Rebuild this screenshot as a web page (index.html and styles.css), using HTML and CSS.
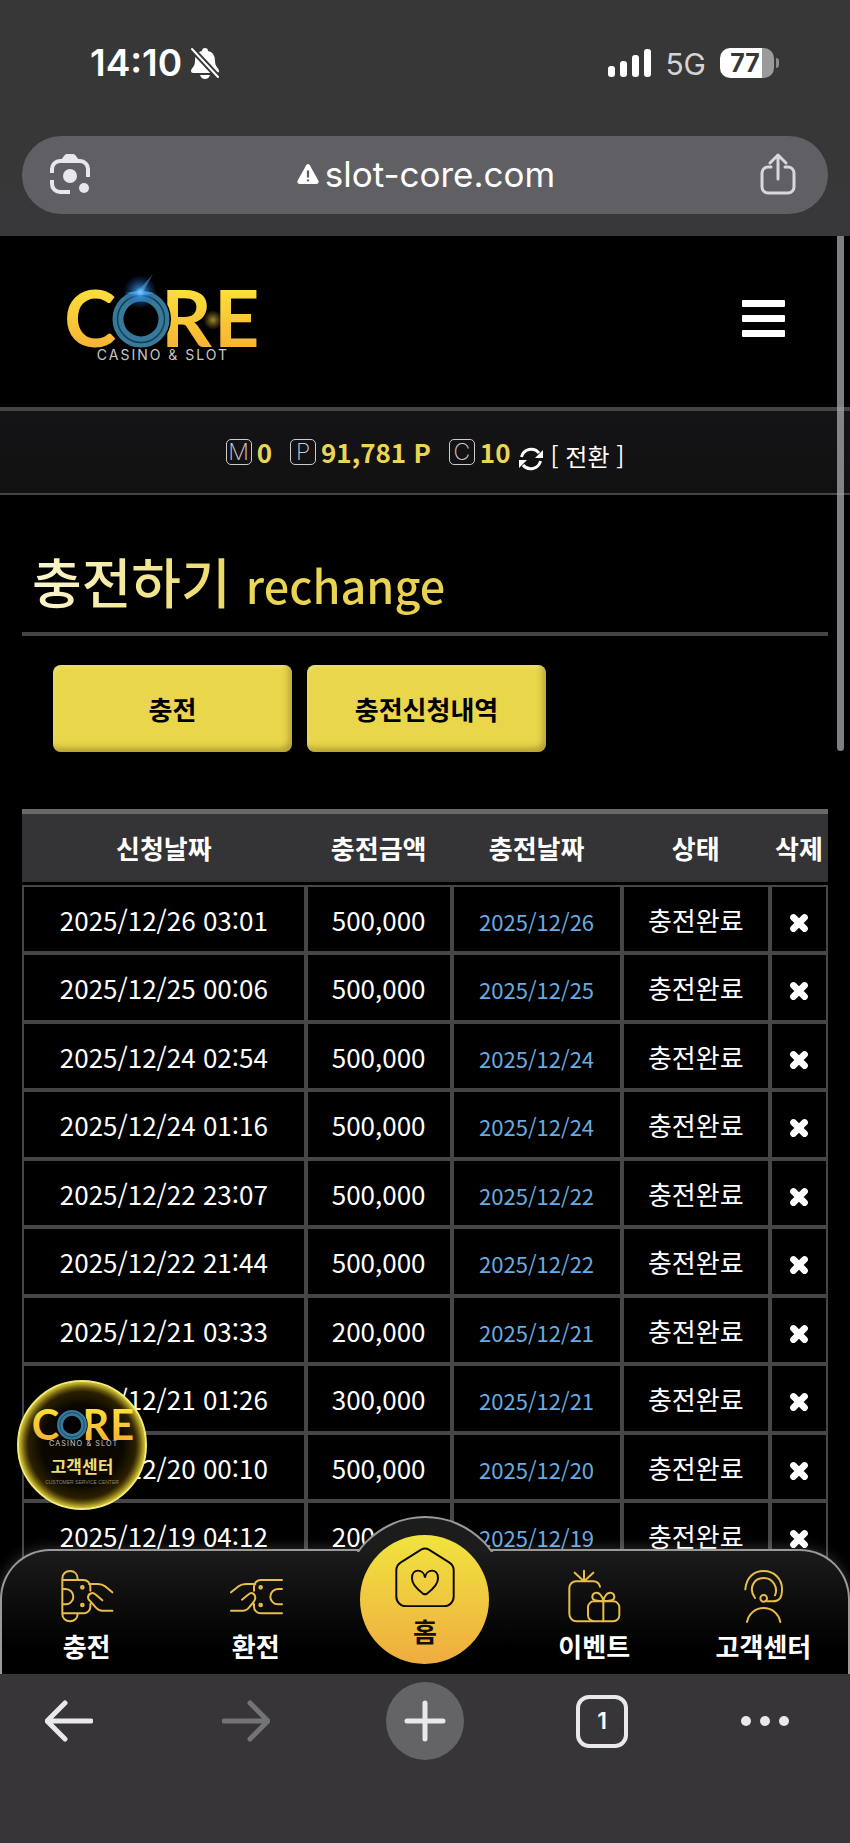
FILE: index.html
```html
<!DOCTYPE html>
<html lang="ko">
<head>
<meta charset="utf-8">
<meta name="viewport" content="width=device-width, initial-scale=1">
<title>충전하기 - CORE</title>
<link rel="stylesheet" href="styles.css">
</head>
<body>
<div class="chrome-top">
  <div class="status">
    <div class="status-left">
      <span class="clock">14:10</span>
      <svg class="bell" viewBox="0 0 30 32" aria-hidden="true">
        <path fill="#fff" d="M15 1c2 0 3 1 3 3 5 1 7 5 7 10 0 6 4 7 4 10 0 1-1 2-2 2H3c-1 0-2-1-2-2 0-3 4-4 4-10 0-5 2-9 7-10 0-2 1-3 3-3zM10 28h10c-1 3-3 4-5 4s-4-1-5-4z"/>
        <path stroke="#373737" stroke-width="6" d="M1 1l28 30"/>
        <path stroke="#fff" stroke-width="2" stroke-linecap="round" d="M2 2l26 28"/>
      </svg>
    </div>
    <div class="status-right">
      <svg class="signal" viewBox="0 0 43 28" fill="#fff" aria-hidden="true">
        <rect x="0" y="17" width="7" height="11" rx="3"/><rect x="12" y="12" width="7" height="16" rx="3"/><rect x="24" y="6" width="7" height="22" rx="3"/><rect x="36" y="0" width="7" height="28" rx="3"/>
      </svg>
      <span class="network">5G</span>
      <span class="battery">77</span>
    </div>
  </div>
  <div class="address">
    <button class="plain" type="button" aria-label="카메라 검색">
      <svg class="lens" viewBox="0 0 40 40" fill="none" stroke="#e8e8ec" stroke-width="4" stroke-linecap="butt">
        <path d="M2 19v-4a8 8 0 0 1 8-8h20a8 8 0 0 1 8 8v8M2 26v4a8 8 0 0 0 8 8h10"/>
        <path stroke="none" fill="#e8e8ec" d="M11 6l3-4q1-2 3-2h6q2 0 3 2l3 4z"/>
        <circle cx="20" cy="22" r="7" fill="#e8e8ec" stroke="none"/><circle cx="34" cy="34" r="5" fill="#e8e8ec" stroke="none"/>
      </svg>
    </button>
    <button class="plain host" type="button">
      <svg class="warn" viewBox="0 0 24 22" aria-hidden="true"><path fill="#fff" d="M10 1.500q2-3 4 0l9.500 17q1 3-2 3.500h-19q-3-.5-2-3.500z"/><path stroke="#5f5f63" stroke-width="2.500" stroke-linecap="round" d="M12 8v6M12 18v.2"/></svg>
      <span>slot-core.com</span>
    </button>
    <button class="plain" type="button" aria-label="공유">
      <svg class="share" viewBox="0 0 36 42" fill="none" stroke="#d8d8dc" stroke-width="3" stroke-linecap="round" stroke-linejoin="round">
        <path d="M11 14H8a6 6 0 0 0-6 6v14a6 6 0 0 0 6 6h20a6 6 0 0 0 6-6V20a6 6 0 0 0-6-6h-3M18 26V3M10 10l8-8 8 8"/>
      </svg>
    </button>
  </div>
</div>

<div class="viewport">
  <header class="site-head">
    <a class="logo-link" href="#" aria-label="CORE CASINO &amp; SLOT">
      <svg class="logo" viewBox="0 0 200 100">
        <defs>
          <linearGradient id="gold" x1="0" y1="0" x2="0" y2="1"><stop offset="0" stop-color="#fbee3c"/><stop offset="1" stop-color="#f6a733"/></linearGradient>
          <radialGradient id="blueGlow"><stop offset="0" stop-color="#7fe0ff"/><stop offset=".3" stop-color="#2f8fe0" stop-opacity=".7"/><stop offset="1" stop-color="#1a50b0" stop-opacity="0"/></radialGradient>
          <radialGradient id="goldGlow"><stop offset="0" stop-color="#ffe95a"/><stop offset="1" stop-color="#f0b030" stop-opacity="0"/></radialGradient>
          <g id="mark">
            <text class="mark-letter" x="4" y="76">C</text>
            <text class="mark-letter" x="101" y="76">R</text>
            <text class="mark-letter" x="154" y="76">E</text>
            <circle cx="81" cy="48" r="30" fill="#000"/>
            <circle cx="81" cy="48" r="23" fill="none" stroke="#37799a" stroke-width="11"/>
            <circle cx="81" cy="48" r="23.500" fill="none" stroke="#153f55" stroke-width="1.500"/>
            <text class="mark-sub" x="103" y="89" text-anchor="middle">CASINO &amp; SLOT</text>
          </g>
        </defs>
        <use href="#mark"/>
        <circle cx="80" cy="21" r="17" fill="url(#blueGlow)"/>
        <path fill="#6abfff" opacity=".45" d="M64 22l14-2 15-17-10 18 13 1-14 2z"/>
        <circle cx="153" cy="49" r="10" fill="url(#goldGlow)" opacity=".6"/>
      </svg>
    </a>
    <button class="plain burger" type="button" aria-label="메뉴"><span></span><span></span><span></span></button>
  </header>

  <section class="wallet">
    <span class="coin"><i class="tag">M</i><b>0</b></span>
    <span class="coin"><i class="tag">P</i><b>91,781 P</b></span>
    <span class="coin"><i class="tag">C</i><b>10</b></span>
    <a class="convert" href="#">
      <svg class="sync" viewBox="0 0 24 24" fill="none" stroke="#fff" stroke-width="3" aria-hidden="true"><path d="M2.500 10A10 10 0 0 1 20 6M21.500 14A10 10 0 0 1 4 18"/><path fill="#fff" stroke="none" d="M24 3v8h-8zM0 21v-8h8z"/></svg>
      <span>[ 전환 ]</span>
    </a>
  </section>

  <main class="page">
    <h1 class="title"><span class="title-text">충전하기 <small>rechange</small></span></h1>
    <div class="tabs">
      <button class="tab" type="button">충전</button>
      <button class="tab" type="button">충전신청내역</button>
    </div>
    <table class="history">
      <colgroup><col class="c-date"><col class="c-amount"><col class="c-done"><col class="c-state"><col class="c-del"></colgroup>
      <thead><tr><th>신청날짜</th><th>충전금액</th><th>충전날짜</th><th>상태</th><th>삭제</th></tr></thead>
      <tbody id="rows"></tbody>
    </table>
  </main>

  <div class="scrollbar"></div>

  <a class="support" href="#" aria-label="고객센터">
    <svg class="support-mark" viewBox="0 12 200 82" aria-hidden="true"><use href="#mark"/></svg>
    <span class="support-name">고객센터</span>
    <span class="support-sub">CUSTOMER SERVICE CENTER</span>
  </a>

  <nav class="dock">
    <div class="dock-bump"></div>
    <a class="dock-item" href="#">
      <svg class="dock-icon" viewBox="0 0 156 156"><path d="M4 132V26C4 12 14 3 27 3s23 9 23 24M4 30h64a20 20 0 0 1 20 20v12M4 130h64a20 20 0 0 0 20-20v-8M4 132c0 13 10 22 23 22s23-9 23-22M4 57h10a23 23 0 0 1 0 46H4M84 42h26c12 0 16 2 24 8l20 17M124 91L103 73c-8-8-22-2-22 10 0 6 6 10 10 14l13 15c6 7 10 10 20 10h30"/><circle cx="64" cy="52" r="4"/><circle cx="64" cy="105" r="4"/></svg>
      <span>충전</span>
    </a>
    <a class="dock-item" href="#">
      <svg class="dock-icon" viewBox="0 0 156 156"><path d="M156 30H92a20 20 0 0 0-20 20v12M156 130H92a20 20 0 0 1-20-20v-8M156 57h-12a23 23 0 0 0 0 46h12M76 42H48c-12 0-16 2-24 8L3 67M36 89l20-16c8-8 20-2 20 10 0 8-4 12-10 19l-12 14c-4 4-8 6-14 6H3"/><circle cx="92" cy="52" r="4"/><circle cx="92" cy="105" r="4"/></svg>
      <span>환전</span>
    </a>
    <a class="dock-item home" href="#">
      <svg class="home-icon" viewBox="0 0 184 184"><path d="M4 72c0-12 4-19 14-25L80 8q12-7 24 0l62 39c10 6 14 13 14 25v80a30 30 0 0 1-30 30H34a30 30 0 0 1-30-30zM92 94C88 66 52 64 52 96c0 22 22 38 34 47q6 4 12 0c12-9 34-25 34-47 0-32-36-30-40-2z"/></svg>
      <span>홈</span>
    </a>
    <a class="dock-item" href="#">
      <svg class="dock-icon" viewBox="0 0 156 156"><path d="M48 2v30M20 8l28 26L76 8M96 50c-3-11-10-16-20-16H24A20 20 0 0 0 4 54v78a22 22 0 0 0 22 22h50"/><rect x="60" y="94" width="94" height="60" rx="18"/><path d="M106 94v60M106 94c-8-2-32 2-33-12-1-15 16-18 24-8 6 7 9 14 9 20zM106 94c8-2 32 2 33-12 1-15-16-18-24-8-6 7-9 14-9 20z"/></svg>
      <span>이벤트</span>
    </a>
    <a class="dock-item" href="#">
      <svg class="dock-icon" viewBox="-20 0 156 156"><path d="M5 58C8 22 30 3 60 3c32 0 55 24 55 54 0 24-6 37-28 37H70M34 84C14 58 28 24 60 24c28 0 44 28 34 52M10 156c12-56 88-56 100 0"/><circle cx="60" cy="85" r="10"/></svg>
      <span>고객센터</span>
    </a>
  </nav>
</div>

<div class="toolbar">
  <button class="plain" type="button" aria-label="뒤로"><svg class="tool" viewBox="0 0 48 48"><path d="M46 24H3M20 6L2 24l18 18"/></svg></button>
  <button class="plain dim" type="button" aria-label="앞으로"><svg class="tool" viewBox="0 0 48 48"><path d="M2 24h43M28 6l18 18-18 18"/></svg></button>
  <button class="plain add" type="button" aria-label="새 탭"><svg class="tool plus" viewBox="0 0 48 48"><path d="M24 6v36M6 24h36"/></svg></button>
  <button class="plain" type="button" aria-label="탭"><span class="tab-count">1</span></button>
  <button class="plain" type="button" aria-label="더보기"><svg class="tool dots" viewBox="0 0 48 48"><circle cx="5" cy="24" r="5"/><circle cx="24" cy="24" r="5"/><circle cx="43" cy="24" r="5"/></svg></button>
</div>
<script src="app.js"></script>
</body>
</html>
```
FILE: styles.css
```css
* { box-sizing: border-box; }
body {
  margin: 0;
  height: 100vh;
  display: flex;
  flex-direction: column;
  overflow: hidden;
  background: #000;
  color: #fff;
  font-family: "Noto Sans CJK KR", "Noto Sans", sans-serif;
  font-size: 26px;
}
a { color: inherit; text-decoration: none; }
svg { display: block; }
.plain { border: 0; padding: 0; margin: 0; background: none; color: inherit; font: inherit; }

/* Browser chrome */
.chrome-top {
  padding: 0 22px 22px;
  background: linear-gradient(#373737 60%, #38373b);
  font-family: Inter, "Liberation Sans", sans-serif;
}
.status {
  height: 136px;
  padding: 0 50px 10px 68px;
  display: flex;
  align-items: center;
  justify-content: space-between;
}
.status-left, .status-right { display: flex; align-items: center; }
.status-left { gap: 8px; }
.status-right { gap: 14px; }
.clock { font-size: 37px; font-weight: 600; line-height: 44px; }
.bell { width: 30px; height: 32px; }
.signal { width: 43px; height: 28px; }
.network { font-size: 30px; color: #d4d4d4; line-height: 44px; padding-top: 2px; }
.battery {
  position: relative;
  width: 54px;
  height: 30px;
  margin-right: 4px;
  padding-right: 4px;
  border-radius: 10px;
  background: linear-gradient(90deg, #fff 42px, #9b9b9b 42px);
  color: #373737;
  font-size: 25px;
  font-weight: 700;
  line-height: 30px;
  text-align: center;
}
.battery::after {
  content: "";
  position: absolute;
  right: -5px;
  top: 10px;
  width: 3px;
  height: 10px;
  border-radius: 0 4px 4px 0;
  background: #8c8c8c;
}
.address {
  height: 78px;
  padding: 0 32px 2px 28px;
  display: flex;
  align-items: center;
  justify-content: space-between;
  border-radius: 39px;
  background: #606064;
}
.host { display: flex; align-items: center; gap: 6px; padding-left: 2px; font-size: 35px; line-height: 44px; }
.lens { width: 40px; height: 40px; }
.warn { width: 22px; height: 20px; }
.share { width: 36px; height: 42px; }

/* Site */
.viewport { position: relative; flex: 1; min-height: 0; overflow: hidden; }
.site-head {
  height: 171px;
  padding: 0 65px 2px 60px;
  display: flex;
  align-items: center;
  justify-content: space-between;
}
.logo { width: 200px; height: 100px; }
.mark-letter { font-family: Lato, sans-serif; font-weight: 700; font-size: 79px; fill: url(#gold); }
.mark-sub { font-family: Inter, sans-serif; font-size: 14px; letter-spacing: 2px; fill: #c8c8c8; }
.burger { display: flex; flex-direction: column; gap: 8px; padding-bottom: 4px; }
.burger span { width: 43px; height: 7px; border-radius: 1px; background: #fff; }

.wallet {
  height: 88px;
  display: flex;
  align-items: center;
  justify-content: center;
  border-top: 4px solid #454548;
  border-bottom: 2px solid #454548;
  background: linear-gradient(#141317, #111);
}
.coin { display: flex; align-items: center; gap: 5px; margin-right: 18px; }
.coin:nth-of-type(3) { margin-right: 8px; }
.coin b { color: #ead653; line-height: 36px; }
.tag {
  width: 26px;
  height: 26px;
  border: 1px solid #ccc;
  border-radius: 5px;
  color: #ccc;
  font: 200 23px/24px Inter, sans-serif;
  text-align: center;
}
.convert { display: flex; align-items: center; gap: 8px; padding-top: 6px; font-size: 24px; }
.sync { width: 24px; height: 24px; margin-top: 8px; }

.page { padding: 0 22px; }
.title {
  margin: 0;
  height: 141px;
  padding: 48px 10px 0;
  border-bottom: 4px solid #454447;
  font-size: 54px;
  font-weight: 500;
  line-height: 76px;
}
.title-text {
  display: inline-block;
  background: linear-gradient(90deg, #fbf6d2, #e9d654 55%, #e9d150);
  background-clip: text;
  -webkit-background-clip: text;
  color: transparent;
}
.title small { font-size: 45px; }
.tabs { display: flex; gap: 15px; padding: 29px 31px 57px; }
.tab {
  width: 239px;
  height: 87px;
  border: 0;
  border-radius: 8px;
  background: #e9d64b;
  box-shadow: inset -3px -4px 6px rgba(110, 90, 10, .45), inset 1px 2px 4px rgba(255, 255, 200, .4);
  color: #000;
  font: inherit;
  font-weight: 700;
}

.history { width: 100%; border-collapse: separate; border-spacing: 0; table-layout: fixed; text-align: center; }
.c-date { width: 35.2%; }
.c-amount { width: 18.1%; }
.c-done { width: 21.1%; }
.c-state { width: 18.4%; }
.c-del { width: 7.2%; }
.history th {
  height: 76px;
  padding: 0;
  border-top: 5px solid #69686a;
  border-bottom: 3px solid #000;
  background: #343336;
  background-clip: padding-box;
  line-height: 38px;
  white-space: nowrap;
}
.history td { height: 68px; padding: 1px 0 0; border: 2px solid #464547; line-height: 38px; white-space: nowrap; }
.history tr:nth-child(even) td { height: 69px; }
.history .done { padding-top: 3px; color: #69abe0; font-size: 22px; }
.remove { display: block; margin: 6px auto 0; }
.remove svg { width: 20px; height: 20px; }

.scrollbar {
  position: absolute;
  top: 0;
  right: 6px;
  width: 7px;
  height: 515px;
  border-radius: 0 0 4px 4px;
  background: rgba(170, 170, 175, .75);
}

.support {
  position: absolute;
  left: 17px;
  bottom: 164px;
  width: 130px;
  height: 130px;
  padding-top: 24px;
  display: flex;
  flex-direction: column;
  align-items: center;
  border: 2px solid #f2ea7a;
  border-radius: 50%;
  background: radial-gradient(circle, #0a0700 45%, #2a2000 60%, #a08c1c 70%);
  box-shadow: inset 0 0 6px #f5e84a;
}
.support-mark { width: 106px; height: 43px; }
.support-name { margin-top: 4px; color: #f0dc78; font-size: 17px; font-weight: 700; line-height: 25px; }
.support-sub { margin-top: 1px; color: #8d8665; font: 5px/6px "Liberation Sans", sans-serif; white-space: nowrap; }

/* Bottom dock */
.dock {
  position: absolute;
  left: 0;
  right: 0;
  bottom: 0;
  height: 125px;
  padding-bottom: 10px;
  display: grid;
  grid-template-columns: repeat(5, 1fr);
  grid-template-rows: 100%;
  align-items: end;
  justify-items: center;
  border: 2px solid #9a9a98;
  border-bottom: 0;
  border-radius: 50px 50px 0 0;
  background: linear-gradient(#1b1b1b, #000 80%);
  box-shadow: 0 0 14px rgba(255, 255, 255, .2);
  font-weight: 700;
}
.dock-bump {
  position: absolute;
  left: 50%;
  top: -35px;
  width: 168px;
  height: 36px;
  margin-left: -84px;
  overflow: hidden;
}
.dock-bump::before {
  content: "";
  display: block;
  height: 168px;
  border: 2px solid #9a9a98;
  border-radius: 50%;
  background: #1c1c1c;
}
.dock-item { display: flex; flex-direction: column; align-items: center; gap: 6px; line-height: 36px; }
.dock-icon { width: 52px; height: 52px; overflow: visible; fill: none; stroke: #e8bd4b; stroke-width: 6; stroke-linecap: round; stroke-linejoin: round; }
.home {
  position: relative;
  width: 129px;
  height: 129px;
  padding-top: 12px;
  border-radius: 50%;
  background: linear-gradient(#f0e43e, #efac40);
  color: #111;
  font-size: 26px;
}
.home-icon { width: 60px; height: 60px; fill: none; stroke: #0c0a00; stroke-width: 6; }

/* Browser toolbar */
.toolbar {
  height: 169px;
  padding: 8px 28px 83px 0;
  display: grid;
  grid-template-columns: 138fr 216fr 142fr 212fr 114fr;
  align-items: center;
  justify-items: center;
  background: #373538;
}
.tool { width: 48px; height: 48px; fill: none; stroke: #e9e8ea; stroke-width: 5; stroke-linecap: round; stroke-linejoin: round; }
.dim .tool { stroke: #747376; }
.add { width: 78px; height: 78px; display: flex; align-items: center; justify-content: center; border-radius: 50%; background: #646466; }
.tool.dots { fill: #e9e8ea; stroke: none; }
.tab-count {
  display: block;
  width: 52px;
  height: 53px;
  border: 4px solid #e9e8ea;
  border-radius: 13px;
  font: 600 23px/45px Inter, sans-serif;
  text-align: center;
}
```
FILE: app.js
```js
const records = [
  ["2025/12/26 03:01", "500,000"],
  ["2025/12/25 00:06", "500,000"],
  ["2025/12/24 02:54", "500,000"],
  ["2025/12/24 01:16", "500,000"],
  ["2025/12/22 23:07", "500,000"],
  ["2025/12/22 21:44", "500,000"],
  ["2025/12/21 03:33", "200,000"],
  ["2025/12/21 01:26", "300,000"],
  ["2025/12/20 00:10", "500,000"],
  ["2025/12/19 04:12", "200,000"]
];
const cross = '<svg viewBox="0 0 18 18" aria-hidden="true"><path d="M4 4l10 10M14 4L4 14" stroke="#fff" stroke-width="6" stroke-linecap="round"/></svg>';
document.getElementById("rows").innerHTML = records.map(([date, amount]) =>
  `<tr><td>${date}</td><td>${amount}</td><td class="done">${date.slice(0, 10)}</td><td>충전완료</td><td><button class="plain remove" type="button" aria-label="삭제">${cross}</button></td></tr>`
).join("");
```
